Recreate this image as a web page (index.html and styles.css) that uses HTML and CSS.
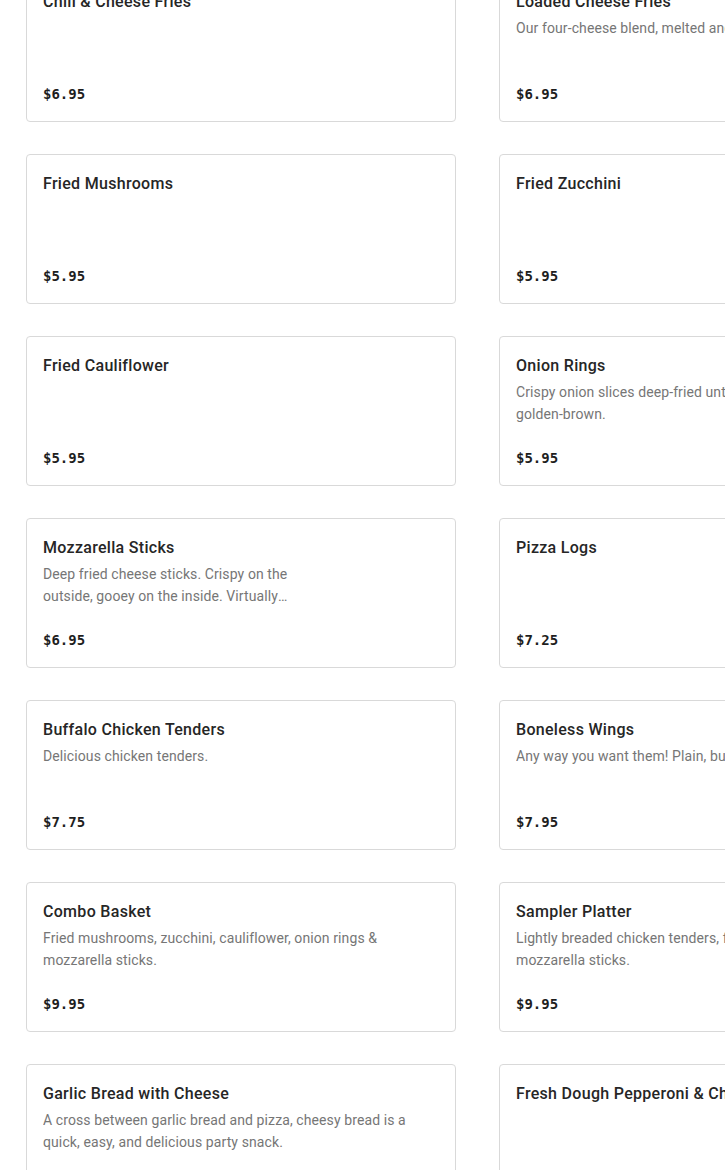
FILE: index.html
```html
<!DOCTYPE html>
<html lang="en">
<head>
<meta charset="utf-8">
<title>Menu</title>
<link rel="stylesheet" href="styles.css">
</head>
<body>
<main class="menu">
  <article class="card">
    <h3 class="card__title">Chili &amp; Cheese Fries</h3>
    <p class="card__price">$6.95</p>
  </article>
  <article class="card">
    <h3 class="card__title">Loaded Cheese Fries</h3>
    <p class="card__desc">Our four-cheese blend, melted and drizzled.</p>
    <p class="card__price">$6.95</p>
  </article>
  <article class="card">
    <h3 class="card__title">Fried Mushrooms</h3>
    <p class="card__price">$5.95</p>
  </article>
  <article class="card">
    <h3 class="card__title">Fried Zucchini</h3>
    <p class="card__price">$5.95</p>
  </article>
  <article class="card">
    <h3 class="card__title">Fried Cauliflower</h3>
    <p class="card__price">$5.95</p>
  </article>
  <article class="card">
    <h3 class="card__title">Onion Rings</h3>
    <p class="card__desc">Crispy onion slices deep-fried until crunchy and perfectly golden-brown.</p>
    <p class="card__price">$5.95</p>
  </article>
  <article class="card card--thumb">
    <h3 class="card__title">Mozzarella Sticks</h3>
    <p class="card__desc">Deep fried cheese sticks. Crispy on the outside, gooey on the inside. Virtually irresistible with marinara sauce.</p>
    <p class="card__price">$6.95</p>
  </article>
  <article class="card">
    <h3 class="card__title">Pizza Logs</h3>
    <p class="card__price">$7.25</p>
  </article>
  <article class="card">
    <h3 class="card__title">Buffalo Chicken Tenders</h3>
    <p class="card__desc">Delicious chicken tenders.</p>
    <p class="card__price">$7.75</p>
  </article>
  <article class="card">
    <h3 class="card__title">Boneless Wings</h3>
    <p class="card__desc">Any way you want them! Plain, buffalo or BBQ.</p>
    <p class="card__price">$7.95</p>
  </article>
  <article class="card">
    <h3 class="card__title">Combo Basket</h3>
    <p class="card__desc">Fried mushrooms, zucchini, cauliflower, onion rings &amp; mozzarella sticks.</p>
    <p class="card__price">$9.95</p>
  </article>
  <article class="card">
    <h3 class="card__title">Sampler Platter</h3>
    <p class="card__desc">Lightly breaded chicken tenders, fried zucchini, onion rings &amp; mozzarella sticks.</p>
    <p class="card__price">$9.95</p>
  </article>
  <article class="card">
    <h3 class="card__title">Garlic Bread with Cheese</h3>
    <p class="card__desc">A cross between garlic bread and pizza, cheesy bread is a quick, easy, and delicious party snack.</p>
    <p class="card__price">$8.95</p>
  </article>
  <article class="card">
    <h3 class="card__title">Fresh Dough Pepperoni &amp; Cheese Bread</h3>
    <p class="card__price">$8.95</p>
  </article>
</main>
</body>
</html>
```

FILE: styles.css
```css
html {
  overflow: hidden;
  background: #ffffff;
}

body {
  margin: 0;
  font-family: Roboto, "Noto Sans", Arial, sans-serif;
  color: #2a2a2a;
}

.menu {
  display: grid;
  grid-template-columns: 430px 430px;
  column-gap: 43px;
  row-gap: 32px;
  margin: -28px 0 0 26px;
  width: 903px;
}

.card {
  box-sizing: border-box;
  height: 150px;
  display: flex;
  flex-direction: column;
  padding: 17px 16px 16px;
  border: 1px solid #d9d9d9;
  border-radius: 4px;
  background: #ffffff;
  overflow: hidden;
}

.card__title {
  margin: 0;
  font-size: 16px;
  line-height: 24px;
  font-weight: 500;
  letter-spacing: 0.3px;
  color: #262626;
  white-space: nowrap;
}

.card__desc {
  margin: 3px 0 0;
  font-size: 14px;
  line-height: 22px;
  letter-spacing: 0.1px;
  color: #767676;
  display: -webkit-box;
  -webkit-line-clamp: 2;
  -webkit-box-orient: vertical;
  overflow: hidden;
}

.card--thumb .card__desc {
  max-width: 272px;
}

.card__price {
  margin: auto 0 0;
  font-family: "DejaVu Sans Mono", "Liberation Mono", monospace;
  font-size: 14px;
  line-height: 22px;
  font-weight: 700;
  color: #1e1e1e;
}
```
